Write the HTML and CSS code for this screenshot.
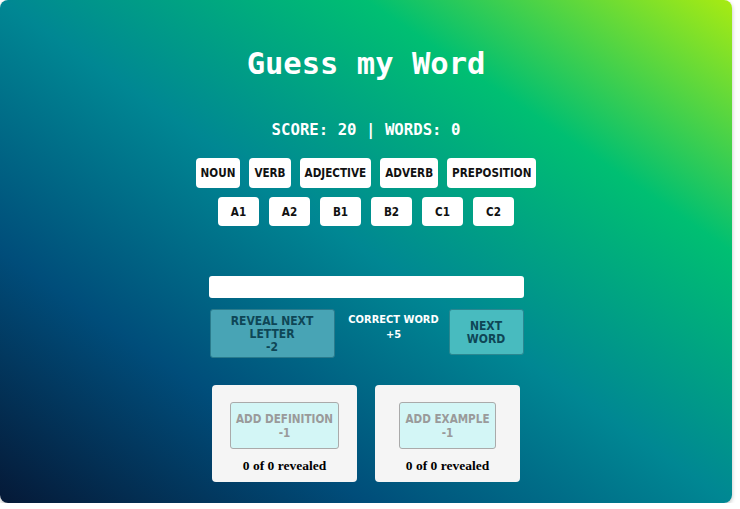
FILE: index.html
```html
<!DOCTYPE html>
<html>
<head>
<meta charset="utf-8">
<link rel="stylesheet" href="styles.css">
</head>
<body>
<div class="app">
  <h1 class="title">Guess my Word</h1>
  <div class="score">SCORE: 20 | WORDS: 0</div>
  <div class="chips types">
    <button class="chip">NOUN</button>
    <button class="chip">VERB</button>
    <button class="chip">ADJECTIVE</button>
    <button class="chip">ADVERB</button>
    <button class="chip">PREPOSITION</button>
  </div>
  <div class="chips levels">
    <button class="chip level">A1</button>
    <button class="chip level">A2</button>
    <button class="chip level">B1</button>
    <button class="chip level">B2</button>
    <button class="chip level">C1</button>
    <button class="chip level">C2</button>
  </div>
  <div class="guess">
    <input class="guess-input" type="text">
    <div class="actions">
      <button class="act reveal">REVEAL NEXT<br>LETTER<br>-2</button>
      <div class="correct">CORRECT WORD<br>+5</div>
      <button class="act next">NEXT<br>WORD</button>
    </div>
  </div>
  <div class="cards">
    <div class="card">
      <button class="hint">ADD DEFINITION<br>-1</button>
      <div class="count">0 of 0 revealed</div>
    </div>
    <div class="card">
      <button class="hint">ADD EXAMPLE<br>-1</button>
      <div class="count">0 of 0 revealed</div>
    </div>
  </div>
</div>
</body>
</html>
```
FILE: styles.css
```css
html, body {
  margin: 0;
  padding: 0;
  background: #ffffff;
}
.app {
  width: 732px;
  height: 503px;
  box-sizing: border-box;
  border-radius: 8px;
  box-shadow: 0 2px 4px rgba(0,0,0,0.25);
  background: linear-gradient(to right top, #051937, #004d7a, #008793, #00bf72, #a8eb12);
  display: flex;
  flex-direction: column;
  align-items: center;
  padding-top: 46px;
}
.title {
  margin: 0;
  font-family: "DejaVu Sans Mono", monospace;
  font-weight: bold;
  font-size: 30.5px;
  line-height: 36px;
  color: #fff;
}
.score {
  margin-top: 38px;
  font-family: "DejaVu Sans Mono", monospace;
  font-weight: bold;
  font-size: 15.7px;
  line-height: 20px;
  color: #fff;
}
.chips {
  display: flex;
  gap: 9px;
}
.types {
  margin-top: 18px;
}
.levels {
  margin-top: 9px;
  gap: 10px;
}
.chip {
  height: 30px;
  padding: 0 5px;
  border: none;
  border-radius: 4px;
  background: #fff;
  color: #111;
  font-family: Tahoma, "DejaVu Sans Condensed", sans-serif;
  font-stretch: condensed;
  font-weight: bold;
  font-size: 11.6px;
}
.level {
  width: 41px;
  height: 29px;
  padding: 0;
}
.guess {
  margin-top: 50px;
  width: 315px;
}
.guess-input {
  display: block;
  width: 315px;
  height: 22px;
  box-sizing: border-box;
  border: none;
  border-radius: 3px;
  background: #fff;
  margin: 0;
}
.actions {
  margin-top: 11px;
  display: flex;
  justify-content: space-between;
  align-items: flex-start;
}
.act {
  box-sizing: border-box;
  margin: 0;
  border-radius: 3px;
  font-family: Tahoma, "DejaVu Sans Condensed", sans-serif;
  font-stretch: condensed;
  font-weight: bold;
  font-size: 12px;
  line-height: 13px;
  color: #0e4656;
  padding: 1px 0 0;
}
.reveal {
  width: 125px;
  height: 49px;
  margin-left: 1px;
  background: #48a4b5;
  border: 1px solid #2a7b8c;
}
.next {
  width: 75px;
  height: 46px;
  background: #48bbbf;
  border: 1px solid #2a8790;
}
.correct {
  padding-top: 3px;
  text-align: center;
  color: #fff;
  font-family: Tahoma, "DejaVu Sans Condensed", sans-serif;
  font-stretch: condensed;
  font-weight: bold;
  font-size: 11px;
  line-height: 15px;
  margin-left: 4px;
}
.cards {
  margin-top: 27px;
  display: flex;
  gap: 18px;
}
.card {
  width: 145px;
  height: 97px;
  box-sizing: border-box;
  background: #f5f5f5;
  border-radius: 4px;
  display: flex;
  flex-direction: column;
  align-items: center;
  padding-top: 17px;
}
.hint {
  height: 47px;
  padding: 0 5px;
  margin: 0;
  background: #d3f6f6;
  border: 1px solid #aaaaaa;
  border-radius: 3px;
  color: #9a9a9a;
  font-family: Tahoma, "DejaVu Sans Condensed", sans-serif;
  font-stretch: condensed;
  font-weight: bold;
  font-size: 11.6px;
  line-height: 14px;
}
.count {
  margin-top: 9px;
  font-family: "Liberation Serif", serif;
  font-weight: bold;
  font-size: 13.5px;
  line-height: 16px;
  color: #000;
}
```
